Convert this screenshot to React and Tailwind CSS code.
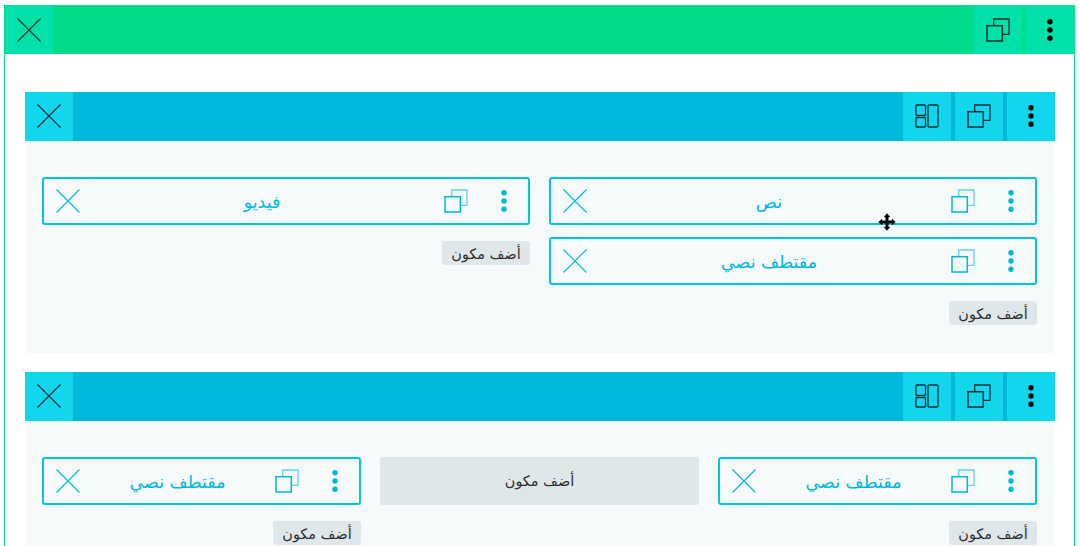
function XIcon({ className }) {
  return (
    <svg width="24" height="24" viewBox="0 0 24 24" fill="none" className={className}>
      <path d="M0.5 0.5 L23.5 23.5 M23.5 0.5 L0.5 23.5" stroke="currentColor" strokeWidth="1.1" />
    </svg>
  );
}

function CopyIcon({ className, backOpacity = 1 }) {
  return (
    <svg width="24" height="24" viewBox="0 0 24 24" fill="none" className={className}>
      <path d="M7.7 7.7 V1 H23 V16.3 H16" stroke="currentColor" strokeWidth="1.3" opacity={backOpacity} />
      <rect x="1" y="7.7" width="15.3" height="15.3" stroke="currentColor" strokeWidth="1.5" />
    </svg>
  );
}

function LayoutIcon({ className }) {
  return (
    <svg width="24" height="24" viewBox="0 0 24 24" fill="none" className={className}>
      <rect x="1" y="1" width="9.5" height="10.5" rx="1" stroke="currentColor" strokeWidth="1.3" />
      <rect x="1" y="13.5" width="9.5" height="9.5" rx="1" stroke="currentColor" strokeWidth="1.3" />
      <rect x="13" y="1" width="10" height="22" rx="1" stroke="currentColor" strokeWidth="1.3" />
    </svg>
  );
}

function DotsIcon({ className }) {
  return (
    <svg width="6" height="24" viewBox="0 0 6 24" className={className} fill="currentColor">
      <circle cx="3" cy="3.8" r="2.7" />
      <circle cx="3" cy="12" r="2.7" />
      <circle cx="3" cy="20.2" r="2.7" />
    </svg>
  );
}

function Cell({ className, children }) {
  return <div className={`flex w-12 shrink-0 items-center justify-center ${className}`}>{children}</div>;
}

function Bar({ layout, tone }) {
  const cell = tone === "green" ? "bg-[#00e1a9] text-[#12302a]" : "bg-[#12d7ec] pb-px text-[#0c2f3a]";
  const bar = tone === "green" ? "border-t border-[#00db8a] bg-[#00db8a]" : "bg-[#00b8d9]";
  return (
    <div className={`flex h-[49px] items-stretch ${bar}`}>
      <Cell className={cell}><DotsIcon className="text-black" /></Cell>
      <div className="w-1 shrink-0" />
      <Cell className={cell}><CopyIcon /></Cell>
      {layout && <div className="w-1 shrink-0" />}
      {layout && <Cell className={cell}><LayoutIcon /></Cell>}
      <div className="flex-1" />
      <Cell className={cell}><XIcon /></Cell>
    </div>
  );
}

function Card({ label }) {
  return (
    <div className="flex h-12 items-center rounded-[3px] border-2 border-[#00c6e0] bg-[#f6fafb] text-[#00b8d9]">
      <div className="flex w-[46px] shrink-0 justify-center pr-[3px]"><DotsIcon /></div>
      <div className="flex w-12 shrink-0 justify-center pr-1"><CopyIcon backOpacity={0.6} /></div>
      <div className="flex-1 pt-[3px] text-center text-[17.5px] leading-none">{label}</div>
      <div className="flex w-[46px] shrink-0 justify-center pl-[2px]"><XIcon /></div>
    </div>
  );
}

function AddButton() {
  return (
    <button className="mt-4 flex h-6 w-[88px] items-center justify-center self-start rounded-[3px] bg-[#e0e7ea] pt-[2px] text-[14.4px] leading-none text-[#2c2c2c]">
      أضف مكون
    </button>
  );
}

function ColumnWithAdd({ items }) {
  return (
    <div className="flex min-w-0 flex-1 flex-col">
      <div className="flex flex-col gap-3">
        {items.map((t, i) => <Card key={i} label={t} />)}
      </div>
      <AddButton />
    </div>
  );
}

function Section({ children }) {
  return (
    <section className="bg-[#f6fafb]">
      <Bar layout tone="blue" />
      <div className="flex gap-[19px] pb-7 pl-[17px] pr-[18px] pt-9">{children}</div>
    </section>
  );
}

export default function App() {
  return (
    <div dir="rtl" className="relative h-[546px] w-[1080px] overflow-hidden bg-white font-['DejaVu_Sans',sans-serif]">
      <div className="mr-[5px] mt-[5px] h-[600px] w-[1071px] border-x border-solid border-[#00db8a]">
        <Bar tone="green" />
        <div className="flex flex-col gap-[19px] pb-4 pl-5 pr-[19px] pt-[38px]">
          <Section>
            <ColumnWithAdd items={["نص", "مقتطف نصي"]} />
            <ColumnWithAdd items={["فيديو"]} />
          </Section>
          <Section>
            <ColumnWithAdd items={["مقتطف نصي"]} />
            <div className="flex h-12 min-w-0 flex-1 items-center justify-center rounded-[3px] bg-[#e0e7ea] text-[14.4px] leading-none text-[#2c2c2c]">
              أضف مكون
            </div>
            <ColumnWithAdd items={["مقتطف نصي"]} />
          </Section>
        </div>
      </div>
      <svg width="20" height="20" viewBox="0 0 20 20" className="absolute left-[877px] top-[212px]">
        <path d="M10 1.5 L13 5 H11.3 V8.7 H15 V7 L18.5 10 L15 13 V11.3 H11.3 V15 H13 L10 18.5 L7 15 H8.7 V11.3 H5 V13 L1.5 10 L5 7 V8.7 H8.7 V5 H7 Z" fill="#000" stroke="#00000055" strokeWidth="1" />
      </svg>
    </div>
  );
}
